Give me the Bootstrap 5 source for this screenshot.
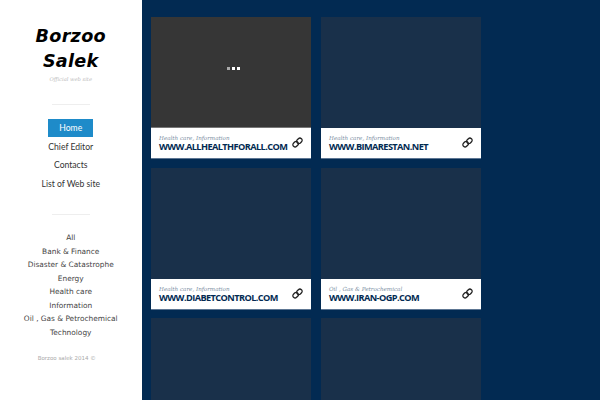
<!DOCTYPE html>
<html lang="en"><head><meta charset="utf-8"><title>Borzoo Salek</title>
<link href="https://cdn.jsdelivr.net/npm/bootstrap@5.3.0/dist/css/bootstrap.min.css" rel="stylesheet">
<style>
html,body{height:400px;overflow:hidden;background:#022a52;}
.shell{height:400px;overflow:hidden;}
.side{width:141.5px;background:#fff;padding-top:24px;flex:none;height:400px;}
.brand{font-family:"DejaVu Sans",sans-serif;font-weight:700;font-style:italic;font-size:17.6px;line-height:25px;color:#000;letter-spacing:.3px;margin:0;}
.tagline{font-family:"DejaVu Serif",serif;font-style:italic;font-size:5.2px;color:#bbb;line-height:10px;margin-top:0;}
.rule{width:38px;height:1px;background:#eee;margin:0 auto;}
.rule-a{margin-top:20px;margin-bottom:14px;}
.rule-b{margin-top:21px;margin-bottom:16.5px;}
.mainnav a{display:block;font-family:Lato,sans-serif;font-size:8.6px;line-height:18px;color:#333;text-decoration:none;margin:0 auto;}
.mainnav li+li{margin-top:.5px;}
.mainnav a.on{background:#1e8bc9;color:#fff;width:45px;}
.cats a{display:block;font-family:"DejaVu Sans",sans-serif;font-size:7.4px;line-height:13.5px;color:#444;text-decoration:none;}
.foot{font-family:"DejaVu Sans",sans-serif;font-size:5.5px;color:#aaa;margin-top:14px;line-height:10px;padding-right:8px;}
.stage{padding:17px 0 0 9.5px;}
.tiles{display:grid;grid-template-columns:160px 160px;column-gap:10px;row-gap:9.5px;}
.tile{height:141px;display:flex;flex-direction:column;}
.thumb{height:111px;flex:none;background:#19304a;display:flex;align-items:center;justify-content:center;gap:2px;padding:0 0 7px 4px;}
.thumb.busy{background:#363636;border-bottom:1px solid #777;}
.thumb i{width:3px;height:3px;flex:none;background:#fff;display:block;}
.thumb i:first-child{background:#aaa;}
.plate{height:30px;background:#fff;padding:7px 8px 0;position:relative;box-shadow:0 1px 0 #5d7693;}
.kind{font-family:"DejaVu Serif",serif;font-style:italic;font-size:5.6px;line-height:6px;color:#7d8fa3;white-space:nowrap;}
.site{font-family:"Open Sans",sans-serif;font-weight:700;font-size:9.2px;line-height:11px;color:#022a52;letter-spacing:-.58px;white-space:nowrap;}
.chain{position:absolute;right:8.5px;top:9px;width:11px;height:11px;}
</style></head>
<body>
<div class="d-flex shell">
<aside class="side text-center">
<h1 class="brand">Borzoo<br>Salek</h1>
<div class="tagline">Official web site</div>
<div class="rule rule-a"></div>
<ul class="list-unstyled mainnav mb-0">
<li><a class="on" href="#">Home</a></li>
<li><a href="#">Chief Editor</a></li>
<li><a href="#">Contacts</a></li>
<li><a href="#">List of Web site</a></li>
</ul>
<div class="rule rule-b"></div>
<ul class="list-unstyled cats mb-0">
<li><a href="#">All</a></li>
<li><a href="#">Bank &amp; Finance</a></li>
<li><a href="#">Disaster &amp; Catastrophe</a></li>
<li><a href="#">Energy</a></li>
<li><a href="#">Health care</a></li>
<li><a href="#">Information</a></li>
<li><a href="#">Oil , Gas &amp; Petrochemical</a></li>
<li><a href="#">Technology</a></li>
</ul>
<div class="foot">Borzoo salek 2014 ©</div>
</aside>
<main class="stage flex-grow-1">
<svg width="0" height="0" class="d-block"><defs><g id="chain" fill="none" stroke="#222" stroke-width="1.3"><rect x="0.7" y="5" width="5.8" height="4.4" rx="2.1" transform="rotate(-45 3.6 7.2)"/><rect x="4.5" y="1.6" width="5.8" height="4.4" rx="2.1" transform="rotate(-45 7.4 3.8)"/></g></defs></svg>
<div class="tiles">
<div class="tile"><div class="thumb busy"><i></i><i></i><i></i></div><div class="plate"><div class="kind">Health care, Information</div><div class="site">WWW.ALLHEALTHFORALL.COM</div><svg class="chain" viewBox="0 0 11 11"><use href="#chain"/></svg></div></div>
<div class="tile"><div class="thumb"></div><div class="plate"><div class="kind">Health care, Information</div><div class="site">WWW.BIMARESTAN.NET</div><svg class="chain" viewBox="0 0 11 11"><use href="#chain"/></svg></div></div>
<div class="tile"><div class="thumb"></div><div class="plate"><div class="kind">Health care, Information</div><div class="site">WWW.DIABETCONTROL.COM</div><svg class="chain" viewBox="0 0 11 11"><use href="#chain"/></svg></div></div>
<div class="tile"><div class="thumb"></div><div class="plate"><div class="kind">Oil , Gas &amp; Petrochemical</div><div class="site">WWW.IRAN-OGP.COM</div><svg class="chain" viewBox="0 0 11 11"><use href="#chain"/></svg></div></div>
<div class="tile"><div class="thumb"></div></div>
<div class="tile"><div class="thumb"></div></div>
</div>
</main>
</div>
<script src="https://cdn.jsdelivr.net/npm/bootstrap@5.3.0/dist/js/bootstrap.bundle.min.js"></script>
</body></html>
